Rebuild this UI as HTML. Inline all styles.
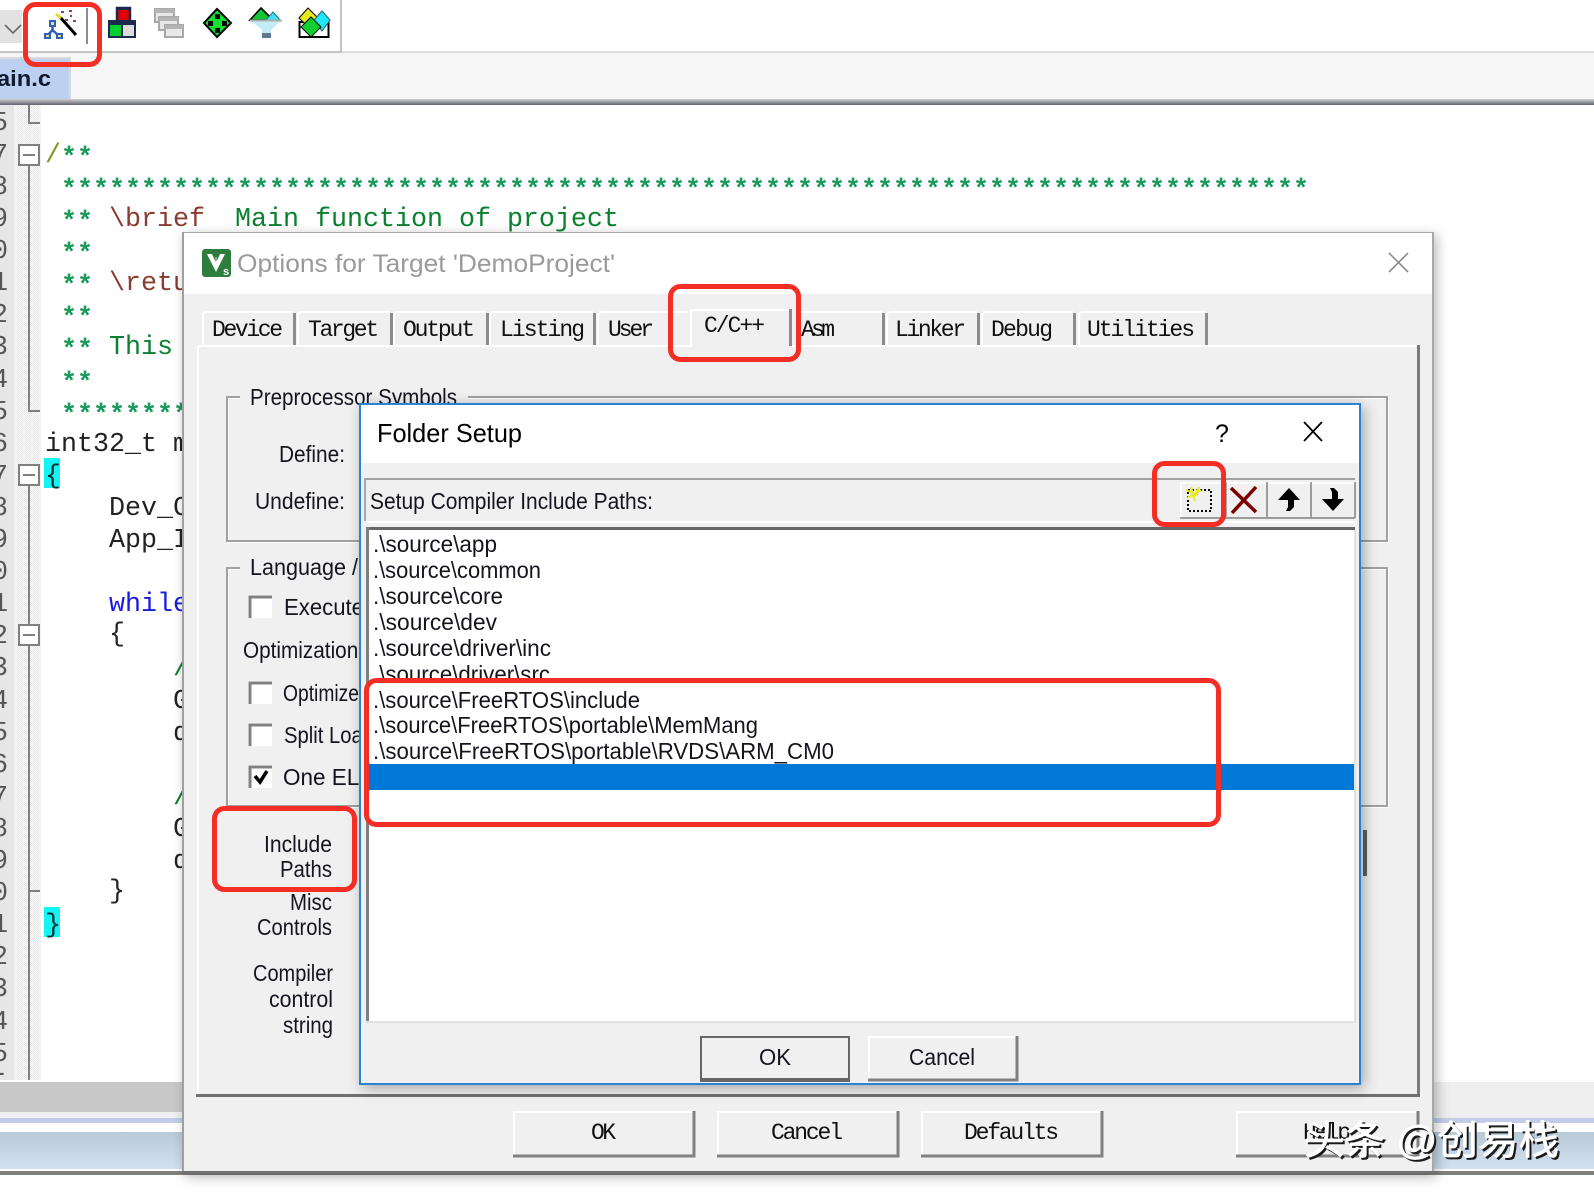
<!DOCTYPE html>
<html><head><meta charset="utf-8"><title>Options for Target</title>
<style>
html,body{margin:0;padding:0;background:#fff;width:1594px;height:1196px;overflow:hidden}
svg{position:absolute;left:0;top:0;display:block}
.m{font-family:"Liberation Mono",monospace;font-size:26.67px}
.s{font-family:"Liberation Sans","Noto Sans CJK SC",sans-serif;font-size:23px;fill:#14141e}
.t{font-family:"Liberation Mono",monospace;font-size:23px;fill:#111}
.st{fill:#1f9a5c;font-weight:bold}
.n{fill:#555}
.k{fill:#222}
.r{fill:none;stroke:#f42d25;stroke-width:5}
</style></head><body>
<svg width="1594" height="1196" viewBox="0 0 1594 1196" xmlns="http://www.w3.org/2000/svg">
<defs>
<pattern id="dith" width="2" height="2" patternUnits="userSpaceOnUse"><rect width="2" height="2" fill="#fff"/><rect width="1" height="1" fill="#e6e6e6"/><rect x="1" y="1" width="1" height="1" fill="#e6e6e6"/></pattern>
<linearGradient id="bar" x1="0" y1="0" x2="0" y2="1"><stop offset="0" stop-color="#b8c9d8"/><stop offset="1" stop-color="#d2e1f0"/></linearGradient>
<linearGradient id="tabl" x1="0" y1="0" x2="0" y2="1"><stop offset="0" stop-color="#d0d0d0"/><stop offset="1" stop-color="#5e6470"/></linearGradient>
</defs>

<!-- toolbar -->
<rect x="0" y="0" width="1594" height="53" fill="#fff"/>
<rect x="0" y="51" width="341" height="3" fill="#c4c4c4"/>
<rect x="341" y="51" width="1253" height="2" fill="#dedede"/>
<rect x="340" y="0" width="2" height="53" fill="#c4c4c4"/>
<rect x="0" y="10" width="22" height="33" fill="#e2e2e2"/>
<polyline points="5,25 13,33 21,25" fill="none" stroke="#6a6a6a" stroke-width="1.6"/>

<!-- wand icon -->
<path d="M60 17 L76 35" stroke="#000" stroke-width="3" fill="none"/>
<path d="M56 14 L61 18" stroke="#e8d820" stroke-width="3" fill="none"/>
<g fill="#a04040"><rect x="61" y="11" width="3" height="2"/><rect x="69" y="10" width="3" height="2"/><rect x="73" y="20" width="3" height="2"/><rect x="65" y="19" width="3" height="2"/><rect x="70" y="15" width="2" height="2"/></g>
<path d="M52.500 25 V32 M47 36 L52.500 30 L59 36" stroke="#3060c0" stroke-width="2.500" fill="none"/>
<g fill="#e8e070" stroke="#3060c0" stroke-width="2"><rect x="50" y="21" width="5" height="5"/><rect x="45" y="34" width="5" height="4"/><rect x="57" y="34" width="5" height="4"/></g>
<rect x="86" y="8" width="2" height="36" fill="#8c8c8c"/>

<!-- blocks icon -->
<rect x="117" y="8" width="13" height="14" fill="#e00000" stroke="#1c2a50" stroke-width="2.500"/>
<rect x="109" y="22" width="13" height="15" fill="#00d030" stroke="#1c2a50" stroke-width="2"/>
<rect x="122" y="22" width="13" height="15" fill="#dcdcdc" stroke="#1c2a50" stroke-width="2"/>
<rect x="108" y="20" width="28" height="5" fill="#1c2a50"/>
<rect x="116" y="7" width="15" height="3" fill="#1c2a50"/>

<!-- windows icon -->
<g fill="#e8e8e8" stroke="#a8a8a8" stroke-width="2"><rect x="155" y="9" width="19" height="13"/><rect x="159" y="17" width="19" height="13"/><rect x="165" y="25" width="18" height="12"/></g>
<g fill="#b4b4b4"><rect x="155" y="9" width="19" height="4"/><rect x="159" y="17" width="19" height="4"/><rect x="165" y="25" width="18" height="4"/></g>

<!-- green diamond -->
<path d="M217 9 L231 23 L217 37 L204 23 Z" fill="#10e030" stroke="#000" stroke-width="2"/>
<g fill="#000"><rect x="215" y="14" width="5" height="5"/><rect x="208" y="21" width="5" height="5"/><rect x="222" y="21" width="5" height="5"/><rect x="215" y="28" width="5" height="5"/></g>

<!-- funnel -->
<path d="M261 8 L273 20 L250 20 Z" fill="#10c830" stroke="#000" stroke-width="1.600"/>
<path d="M273 12 L281 21 L265 21 Z" fill="#40e0f0" stroke="#207080" stroke-width="1"/>
<path d="M250 20 H282 L271 30 V37 H262 V30 Z" fill="#c4ecf6"/>
<path d="M250 20.500 H282" stroke="#a8b0b0" stroke-width="2"/>
<rect x="262" y="33" width="9" height="5" fill="#607890"/>

<!-- combo -->
<rect x="299.500" y="22" width="29" height="15" fill="#fff" stroke="#000" stroke-width="2"/>
<path d="M308 8 L318 18 L308 27 L299 18 Z" fill="#e8e820" stroke="#000" stroke-width="1"/>
<path d="M322 11 L330 20 L322 31 L314 20 Z" fill="#20e8f8" stroke="#206070" stroke-width="1"/>
<path d="M311 17 L321 27 L311 37 L301 27 Z" fill="#10d030" stroke="#000" stroke-width="1"/>

<!-- file tab bar -->
<rect x="0" y="53" width="1594" height="46" fill="#f6f6f6"/>
<rect x="0" y="57" width="71" height="42" fill="#d8d8d8"/>
<rect x="0" y="59" width="69" height="40" fill="#bcd1f2"/>
<text x="-3" y="86" font-family="Liberation Sans,sans-serif" font-size="22" font-weight="bold" fill="#101a30" textLength="54" lengthAdjust="spacingAndGlyphs">ain.c</text>
<rect x="0" y="99" width="1594" height="6" fill="url(#tabl)"/>

<!-- editor -->
<rect x="0" y="105" width="1594" height="977" fill="#fff"/>
<rect x="0" y="105" width="14" height="975" fill="#e6e6e6"/>
<rect x="14" y="105" width="27" height="975" fill="url(#dith)"/>

<g class="m n">
<text x="-8" y="130">5</text><text x="-8" y="162">7</text><text x="-8" y="194">8</text><text x="-8" y="226">9</text><text x="-8" y="258">0</text><text x="-8" y="290">1</text><text x="-8" y="322">2</text><text x="-8" y="354">3</text><text x="-8" y="387">4</text><text x="-8" y="419">5</text><text x="-8" y="451">6</text><text x="-8" y="483">7</text><text x="-8" y="515">8</text><text x="-8" y="547">9</text><text x="-8" y="579">0</text><text x="-8" y="611">1</text><text x="-8" y="643">2</text><text x="-8" y="675">3</text><text x="-8" y="708">4</text><text x="-8" y="740">5</text><text x="-8" y="772">6</text><text x="-8" y="804">7</text><text x="-8" y="836">8</text><text x="-8" y="868">9</text><text x="-8" y="900">0</text><text x="-8" y="932">1</text><text x="-8" y="964">2</text><text x="-8" y="996">3</text><text x="-8" y="1029">4</text><text x="-8" y="1061">5</text><text x="-8" y="1081">-</text>
</g>

<!-- fold lines -->
<g stroke="#808080" stroke-width="2" fill="none">
<path d="M29 105 V123 H40"/>
<path d="M29 165 V411 H40"/>
<path d="M29 485 V1080"/>
<path d="M29 891 H40"/>
<rect x="19" y="145" width="20" height="20" fill="#fff"/>
<path d="M23 155 H35"/>
<rect x="19" y="465" width="20" height="20" fill="#fff"/>
<path d="M23 475 H35"/>
<rect x="19" y="625" width="20" height="20" fill="#fff"/>
<path d="M23 635 H35"/>
</g>

<!-- code -->
<rect x="44" y="458" width="16" height="30" fill="#14f4f4"/>
<rect x="44" y="907" width="16" height="30" fill="#14f4f4"/>
<g class="m">
<text x="45" y="162" fill="#7a9a20">/</text>
<text x="61" y="165" class="st">**</text>
<text x="61" y="197" class="st" textLength="1248">******************************************************************************</text>
<text x="61" y="229" class="st">**</text>
<text x="109" y="226" fill="#8a3c30">\brief</text>
<text x="235" y="226" fill="#0a8030">Main function of project</text>
<text x="61" y="261" class="st">**</text>
<text x="61" y="293" class="st">**</text>
<text x="109" y="290" fill="#8a3c30">\retu</text>
<text x="61" y="325" class="st">**</text>
<text x="61" y="357" class="st">**</text>
<text x="109" y="354" fill="#0a8030">This</text>
<text x="61" y="390" class="st">**</text>
<text x="61" y="422" class="st">*********</text>
<text x="45" y="451" class="k">int32_t m</text>
<text x="45" y="483" fill="#003030">{</text>
<text x="109" y="515" class="k">Dev_C</text>
<text x="109" y="547" class="k">App_I</text>
<text x="109" y="611" fill="#1a1ae0">while</text>
<text x="109" y="641" class="k">{</text>
<text x="173" y="675" fill="#0a8030">/</text>
<text x="173" y="708" class="k">G</text>
<text x="173" y="740" class="k">d</text>
<text x="173" y="804" fill="#0a8030">/</text>
<text x="173" y="836" class="k">G</text>
<text x="173" y="868" class="k">d</text>
<text x="109" y="898" class="k">}</text>
<text x="45" y="932" fill="#003030">}</text>
</g>

<!-- bottom window strips -->
<rect x="0" y="1082" width="200" height="30" fill="#c8c8c8"/>
<rect x="1400" y="1082" width="194" height="36" fill="#eeeeee"/>
<rect x="0" y="1112" width="200" height="6" fill="#f0f0f0"/>
<rect x="0" y="1118" width="1594" height="5" fill="#c2cce8"/>
<rect x="0" y="1123" width="1594" height="9" fill="#fff"/>
<rect x="0" y="1132" width="1594" height="37" fill="url(#bar)"/>
<rect x="0" y="1171" width="1594" height="4" fill="#808080"/>

<!-- options dialog -->
<g style="filter:drop-shadow(3px 3px 6px rgba(0,0,0,.28))">
<rect x="182" y="232" width="1252" height="942" fill="#f0f0f0"/>
</g>
<rect x="182" y="232" width="1252" height="62" fill="#fff"/>
<rect x="182" y="232" width="1252" height="1" fill="#a8a8a8"/>
<rect x="182" y="232" width="2" height="942" fill="#a0a0a0"/>
<rect x="1432" y="232" width="2" height="942" fill="#a8a8a8"/>
<rect x="182" y="1171" width="1252" height="3" fill="#707070"/>

<!-- title -->
<rect x="202" y="249" width="29" height="28" rx="3" fill="#2f7d3c"/>
<path d="M207 254 L216 272 L225 254 L220 254 L216 263 L212 254 Z" fill="#fff"/>
<text x="215" y="262" font-family="Liberation Sans,sans-serif" font-size="9" fill="#fff">&#956;</text>
<text x="223" y="275" font-family="Liberation Sans,sans-serif" font-size="11" font-weight="bold" fill="#fff">s</text>
<text x="237" y="272" font-family="Liberation Sans,sans-serif" font-size="25" fill="#9a9a9a" textLength="378" lengthAdjust="spacingAndGlyphs">Options for Target 'DemoProject'</text>
<path d="M1389 253 L1408 272 M1408 253 L1389 272" stroke="#8c8c8c" stroke-width="1.600" fill="none"/>

<!-- tabs -->
<g fill="none" stroke-width="2">
<g stroke="#fff">
<path d="M203 345 V314 L206 312 H293"/><path d="M298 345 V314 L301 312 H390"/><path d="M394 345 V314 L397 312 H486"/><path d="M490 345 V314 L493 312 H593"/><path d="M598 345 V314 L601 312 H688"/><path d="M795 312 H882"/><path d="M887 345 V314 L890 312 H977"/><path d="M982 345 V314 L985 312 H1073"/><path d="M1079 345 V314 L1082 312 H1206"/>
</g>
</g>
<g fill="#8c8c8c">
<rect x="293" y="313" width="3" height="32"/><rect x="390" y="313" width="3" height="32"/><rect x="486" y="313" width="3" height="32"/><rect x="593" y="313" width="3" height="32"/><rect x="882" y="313" width="3" height="32"/><rect x="977" y="313" width="3" height="32"/><rect x="1073" y="313" width="3" height="32"/><rect x="1205" y="313" width="3" height="32"/>
</g>

<!-- tab pane -->
<rect x="198" y="345" width="1220" height="2" fill="#fff"/>
<rect x="197" y="345" width="2" height="750" fill="#fff"/>
<rect x="1417" y="345" width="3" height="752" fill="#7c7c7c"/>
<rect x="196" y="1094" width="1224" height="3" fill="#707070"/>

<!-- selected tab -->
<rect x="690" y="308" width="101" height="40" fill="#f0f0f0"/>
<path d="M691 347 V310 H789" stroke="#fff" stroke-width="2" fill="none"/>
<rect x="789" y="309" width="3" height="37" fill="#8c8c8c"/>

<g class="t">
<text x="212" y="336" textLength="71" lengthAdjust="spacing">Device</text>
<text x="308" y="336" textLength="71" lengthAdjust="spacing">Target</text>
<text x="403" y="336" textLength="72" lengthAdjust="spacing">Output</text>
<text x="500" y="336" textLength="85" lengthAdjust="spacing">Listing</text>
<text x="608" y="336" textLength="46" lengthAdjust="spacing">User</text>
<text x="704" y="332" textLength="61" lengthAdjust="spacing">C/C++</text>
<text x="801" y="336" textLength="34" lengthAdjust="spacing">Asm</text>
<text x="895" y="336" textLength="71" lengthAdjust="spacing">Linker</text>
<text x="991" y="336" textLength="62" lengthAdjust="spacing">Debug</text>
<text x="1087" y="336" textLength="108" lengthAdjust="spacing">Utilities</text>
</g>

<!-- group boxes -->
<g fill="none">
<rect x="228" y="398" width="1160" height="144" stroke="#fff" stroke-width="2"/>
<rect x="227" y="397" width="1160" height="144" stroke="#a0a0a0" stroke-width="2"/>
<rect x="228" y="569" width="1160" height="238" stroke="#fff" stroke-width="2"/>
<rect x="227" y="568" width="1160" height="238" stroke="#a0a0a0" stroke-width="2"/>
</g>
<rect x="240" y="392" width="228" height="10" fill="#f0f0f0"/>
<rect x="240" y="563" width="140" height="10" fill="#f0f0f0"/>

<g class="s">
<text x="250" y="405" textLength="207" lengthAdjust="spacingAndGlyphs">Preprocessor Symbols</text>
<text x="279" y="462" textLength="66" lengthAdjust="spacingAndGlyphs">Define:</text>
<text x="255" y="509" textLength="90" lengthAdjust="spacingAndGlyphs">Undefine:</text>
<text x="250" y="575" textLength="108" lengthAdjust="spacingAndGlyphs">Language /</text>
<text x="284" y="615" textLength="80" lengthAdjust="spacingAndGlyphs">Execute</text>
<text x="243" y="658" textLength="121" lengthAdjust="spacingAndGlyphs">Optimization:</text>
<text x="283" y="701" textLength="76" lengthAdjust="spacingAndGlyphs">Optimize</text>
<text x="284" y="743" textLength="90" lengthAdjust="spacingAndGlyphs">Split Load</text>
<text x="283" y="785" textLength="90" lengthAdjust="spacingAndGlyphs">One ELF</text>
<text x="264" y="852" textLength="68" lengthAdjust="spacingAndGlyphs">Include</text>
<text x="280" y="877" textLength="52" lengthAdjust="spacingAndGlyphs">Paths</text>
<text x="290" y="910" textLength="42" lengthAdjust="spacingAndGlyphs">Misc</text>
<text x="257" y="935" textLength="75" lengthAdjust="spacingAndGlyphs">Controls</text>
<text x="253" y="981" textLength="80" lengthAdjust="spacingAndGlyphs">Compiler</text>
<text x="269" y="1007" textLength="64" lengthAdjust="spacingAndGlyphs">control</text>
<text x="283" y="1033" textLength="50" lengthAdjust="spacingAndGlyphs">string</text>
</g>

<!-- checkboxes -->
<g>
<rect x="248" y="595" width="24" height="23" fill="#fff"/><path d="M250 618 V597 H272" fill="none" stroke="#808080" stroke-width="3"/>
<rect x="248" y="681" width="24" height="23" fill="#fff"/><path d="M250 704 V683 H272" fill="none" stroke="#808080" stroke-width="3"/>
<rect x="248" y="723" width="24" height="23" fill="#fff"/><path d="M250 746 V725 H272" fill="none" stroke="#808080" stroke-width="3"/>
<rect x="248" y="765" width="24" height="23" fill="#fff"/><path d="M250 788 V767 H272" fill="none" stroke="#808080" stroke-width="3"/>
<path d="M255 776 L260 782 L267 771" fill="none" stroke="#000" stroke-width="3.500"/>
</g>

<!-- stray bar -->
<rect x="1363" y="830" width="4" height="46" fill="#606060"/>

<!-- outer buttons -->
<g>
<rect x="513" y="1111" width="182" height="46" fill="#f0f0f0"/><path d="M514 1157 V1112 H694" fill="none" stroke="#fff" stroke-width="2"/><path d="M513 1156 H694 V1111" fill="none" stroke="#808080" stroke-width="3"/>
<rect x="717" y="1111" width="182" height="46" fill="#f0f0f0"/><path d="M718 1157 V1112 H898" fill="none" stroke="#fff" stroke-width="2"/><path d="M717 1156 H898 V1111" fill="none" stroke="#808080" stroke-width="3"/>
<rect x="921" y="1111" width="182" height="46" fill="#f0f0f0"/><path d="M922 1157 V1112 H1102" fill="none" stroke="#fff" stroke-width="2"/><path d="M921 1156 H1102 V1111" fill="none" stroke="#808080" stroke-width="3"/>
<rect x="1236" y="1111" width="183" height="46" fill="#f0f0f0"/><path d="M1237 1157 V1112 H1418" fill="none" stroke="#fff" stroke-width="2"/><path d="M1236 1156 H1418 V1111" fill="none" stroke="#808080" stroke-width="3"/>
</g>
<g class="t">
<text x="591" y="1139" textLength="25" lengthAdjust="spacing">OK</text>
<text x="771" y="1139" textLength="72" lengthAdjust="spacing">Cancel</text>
<text x="964" y="1139" textLength="95" lengthAdjust="spacing">Defaults</text>
<text x="1303" y="1139" textLength="48" lengthAdjust="spacing">Help</text>
</g>

<!-- folder setup dialog -->
<g style="filter:drop-shadow(3px 3px 7px rgba(0,0,0,.32))">
<rect x="359" y="403" width="1002" height="682" fill="#f0f0f0"/>
</g>
<rect x="360" y="404" width="1000" height="59" fill="#fff"/>
<rect x="360" y="404" width="1000" height="680" fill="none" stroke="#2a82d0" stroke-width="2"/>
<text x="377" y="442" font-family="Liberation Sans,sans-serif" font-size="26" fill="#000" textLength="145" lengthAdjust="spacingAndGlyphs">Folder Setup</text>
<text x="1215" y="442" font-family="Liberation Sans,sans-serif" font-size="25" fill="#000">?</text>
<path d="M1304 422 L1322 441 M1322 422 L1304 441" stroke="#000" stroke-width="1.800" fill="none"/>

<!-- setup bar -->
<rect x="364" y="478" width="991" height="2" fill="#a0a0a0"/>
<rect x="364" y="478" width="2" height="43" fill="#a8a8a8"/>
<rect x="366" y="521" width="989" height="2" fill="#fff"/>
<text class="s" x="370" y="509" textLength="283" lengthAdjust="spacingAndGlyphs">Setup Compiler Include Paths:</text>

<!-- small toolbar buttons -->
<g>
<rect x="1180" y="482" width="175" height="36" fill="#f0f0f0"/>
<path d="M1181 518 V483 H1354" fill="none" stroke="#fff" stroke-width="1.500"/>
<rect x="1180" y="517" width="175" height="2" fill="#9c9c9c"/>
<rect x="1225" y="482" width="2" height="36" fill="#a8a8a8"/>
<rect x="1266" y="482" width="2" height="36" fill="#9c9c9c"/>
<rect x="1310" y="482" width="2" height="36" fill="#9c9c9c"/>
<rect x="1354" y="482" width="2" height="36" fill="#9c9c9c"/>
</g>
<rect x="1188" y="490" width="23" height="21" fill="none" stroke="#000" stroke-width="2" stroke-dasharray="2 2"/>
<path d="M1186 490 L1198 495 M1191 487 L1195 501 M1187 498 L1201 490 M1199 487 L1193 498" stroke="#e8e820" stroke-width="2" fill="none"/>
<path d="M1231 488 L1256 512 M1256 487 L1232 513" stroke="#7c0000" stroke-width="3.500" fill="none"/>
<path d="M1289 488 L1300 500 H1294 V507 L1290 511 H1286 L1288 507 V500 H1278 Z" fill="#000"/>
<path d="M1333 511 L1344 499 H1338 V492 L1334 488 H1330 L1332 492 V499 H1322 Z" fill="#000"/>

<!-- list -->
<rect x="366" y="527" width="989" height="495" fill="#fff"/>
<rect x="366" y="527" width="989" height="3" fill="#686868"/>
<rect x="366" y="527" width="3" height="495" fill="#808080"/>
<rect x="1354" y="530" width="2" height="493" fill="#e2e2e2"/>
<rect x="366" y="1021" width="990" height="2" fill="#e2e2e2"/>
<rect x="369" y="764" width="985" height="26" fill="#0078d7"/>
<g class="s">
<text x="373" y="552" textLength="124" lengthAdjust="spacingAndGlyphs">.\source\app</text>
<text x="373" y="578" textLength="168" lengthAdjust="spacingAndGlyphs">.\source\common</text>
<text x="373" y="604" textLength="130" lengthAdjust="spacingAndGlyphs">.\source\core</text>
<text x="373" y="630" textLength="124" lengthAdjust="spacingAndGlyphs">.\source\dev</text>
<text x="373" y="656" textLength="178" lengthAdjust="spacingAndGlyphs">.\source\driver\inc</text>
<text x="373" y="682" textLength="177" lengthAdjust="spacingAndGlyphs">.\source\driver\src</text>
<text x="373" y="708" textLength="267" lengthAdjust="spacingAndGlyphs">.\source\FreeRTOS\include</text>
<text x="373" y="733" textLength="385" lengthAdjust="spacingAndGlyphs">.\source\FreeRTOS\portable\MemMang</text>
<text x="373" y="759" textLength="461" lengthAdjust="spacingAndGlyphs">.\source\FreeRTOS\portable\RVDS\ARM_CM0</text>
</g>
<rect x="369" y="683" width="840" height="5" fill="#fff"/>

<!-- folder buttons -->
<rect x="700" y="1036" width="150" height="46" fill="#f0f0f0"/>
<path d="M701 1082 V1037 H849 V1082" fill="none" stroke="#666" stroke-width="2"/>
<rect x="700" y="1078" width="150" height="4" fill="#666"/>
<rect x="868" y="1036" width="150" height="45" fill="#f0f0f0"/>
<path d="M869 1081 V1037 H1017" fill="none" stroke="#fff" stroke-width="2"/>
<path d="M868 1080 H1017 V1036" fill="none" stroke="#808080" stroke-width="3"/>
<g class="s">
<text x="759" y="1065" textLength="32" lengthAdjust="spacingAndGlyphs">OK</text>
<text x="909" y="1065" textLength="66" lengthAdjust="spacingAndGlyphs">Cancel</text>
</g>

<!-- red annotation boxes -->
<rect class="r" x="25.500" y="4.500" width="74" height="60" rx="10"/>
<rect class="r" x="670.500" y="286.500" width="128" height="73" rx="10"/>
<rect class="r" x="1154.500" y="463.500" width="69" height="61" rx="10"/>
<rect class="r" x="214.500" y="808.500" width="140" height="81" rx="10"/>
<rect class="r" x="366.500" y="680.500" width="852" height="144" rx="10"/>

<!-- watermark -->
<text x="1306" y="1156" font-family="Liberation Sans,Noto Sans CJK SC,sans-serif" font-size="40" fill="#1a1a1a" stroke="#1a1a1a" stroke-width=".7" textLength="255" lengthAdjust="spacingAndGlyphs">头条 @创易栈</text>
<text x="1304" y="1154" font-family="Liberation Sans,Noto Sans CJK SC,sans-serif" font-size="40" fill="#fff" stroke="#fff" stroke-width=".7" textLength="255" lengthAdjust="spacingAndGlyphs">头条 @创易栈</text>
</svg>
</body></html>
